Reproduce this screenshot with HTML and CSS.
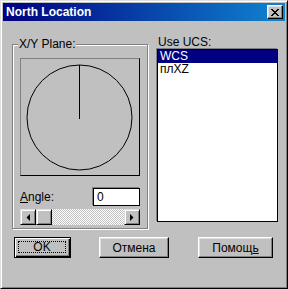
FILE: index.html
```html
<!DOCTYPE html>
<html>
<head>
    <title>North Location</title>
    <link rel="stylesheet" href="styles.css">
</head>
<body>
    <div class="window">
        <div class="titlebar">
            <span class="title">North Location</span>
            <div class="close">
                <svg width="8" height="7" viewBox="0 0 8 7">
                    <path d="M0 0h2v1h1v1h2v-1h1v-1h2v1h-1v1h-1v1h-1v1h1v1h1v1h1v1h-2v-1h-1v-1h-2v1h-1v1h-2v-1h1v-1h1v-1h1v-1h-1v-1h-1v-1h-1z" fill="#000"/>
                </svg>
            </div>
        </div>
        <div class="content">
            <div class="top">
                <div class="group">
                    <span class="legend">X/Y Plane:</span>
                    <div class="dial">
                        <svg width="118" height="116" viewBox="0 0 118 116">
                            <circle cx="58.5" cy="58.5" r="52.5" fill="none" stroke="#000" stroke-width="1"/>
                            <line x1="58.5" y1="6" x2="58.5" y2="60" stroke="#000" stroke-width="1"/>
                        </svg>
                    </div>
                    <div class="angle-row">
                        <span class="angle-label"><u>A</u>ngle:</span>
                        <div class="edit">0</div>
                    </div>
                    <div class="scrollbar">
                        <div class="sb-btn">
                            <svg width="4" height="7" viewBox="0 0 4 7"><path d="M4 0v7L0.5 3.5z" fill="#000"/></svg>
                        </div>
                        <div class="sb-thumb"></div>
                        <div class="sb-track"></div>
                        <div class="sb-btn">
                            <svg width="4" height="7" viewBox="0 0 4 7"><path d="M0 0v7L3.5 3.5z" fill="#000"/></svg>
                        </div>
                    </div>
                </div>
                <div class="ucs">
                    <div class="ucs-label">Use UCS:</div>
                    <div class="listbox">
                        <div class="item selected">WCS</div>
                        <div class="item">плXZ</div>
                    </div>
                </div>
            </div>
            <div class="buttons">
                <div class="btn default btn-ok"><span class="focus">OK</span></div>
                <div class="btn btn-cancel">Отмена</div>
                <div class="btn btn-help">Помощ<u>ь</u></div>
            </div>
        </div>
    </div>
</body>
</html>
```

FILE: styles.css
```css
body {
    margin: 0;
    font-family: 'Liberation Sans', Arial, sans-serif;
    font-size: 12px;
    color: #000;
    background: #c0c0c0;
}
.window {
    width: 288px;
    height: 289px;
    box-sizing: border-box;
    background: #c0c0c0;
    border: 1px solid;
    border-color: #dfdfdf #000 #000 #dfdfdf;
    box-shadow: inset 1px 1px #fff, inset -1px -1px #808080;
    padding: 2px;
}
.titlebar {
    height: 18px;
    display: flex;
    align-items: center;
    justify-content: space-between;
    padding: 0 2px 0 3px;
    background: linear-gradient(90deg, #000080, #1084d0);
}
.title {
    color: #fff;
    font-weight: bold;
    font-size: 12px;
}
.close {
    width: 16px;
    height: 14px;
    box-sizing: border-box;
    background: #c0c0c0;
    border: 1px solid;
    border-color: #fff #000 #000 #fff;
    box-shadow: inset -1px -1px #808080, inset 1px 1px #dfdfdf;
    display: flex;
    align-items: center;
    justify-content: center;
}
.content {
    padding: 0 0 0 9px;
}
.top {
    display: flex;
    gap: 9px;
}
.group {
    position: relative;
    margin-top: 23px;
    width: 136px;
    height: 185px;
    box-sizing: border-box;
    border: 1px solid #808080;
    box-shadow: inset 1px 1px #fff, 1px 1px #fff;
    padding: 13px 0 0 7px;
}
.legend {
    position: absolute;
    top: -8px;
    left: 5px;
    padding: 0 1px;
    background: #c0c0c0;
    line-height: 14px;
}
.dial {
    width: 120px;
    height: 118px;
    box-sizing: border-box;
    border: 1px solid;
    border-color: #808080 #000 #000 #808080;
}
.dial svg {
    display: block;
}
.angle-row {
    display: flex;
    align-items: center;
    justify-content: space-between;
    width: 120px;
    margin-top: 12px;
}
.edit {
    width: 47px;
    height: 18px;
    box-sizing: border-box;
    background: #fff;
    border: 1px solid #000;
    box-shadow: -1px -1px #808080;
    padding: 1px 0 0 3px;
    line-height: 14px;
}
.scrollbar {
    display: flex;
    width: 120px;
    height: 16px;
    margin-top: 3px;
}
.sb-btn,
.sb-thumb {
    width: 16px;
    height: 16px;
    box-sizing: border-box;
    background: #c0c0c0;
    border: 1px solid;
    border-color: #dfdfdf #000 #000 #dfdfdf;
    box-shadow: inset 1px 1px #fff, inset -1px -1px #808080;
    display: flex;
    align-items: center;
    justify-content: center;
}
.sb-track {
    flex: 1;
    background: repeating-conic-gradient(#c0c0c0 0 25%, #fff 0 50%) 0 0 / 2px 2px;
}
.ucs {
    padding-top: 15px;
}
.ucs-label {
    line-height: 13px;
    padding-left: 1px;
}
.listbox {
    width: 121px;
    height: 173px;
    box-sizing: border-box;
    background: #fff;
    border: 1px solid #000;
    box-shadow: -1px -1px #808080;
    padding: 0;
}
.item {
    height: 13px;
    line-height: 13px;
    padding-left: 2px;
}
.item.selected {
    background: #000080;
    color: #fff;
}
.buttons {
    display: flex;
    margin-top: 8px;
    padding-left: 2px;
}
.btn {
    height: 21px;
    box-sizing: border-box;
    background: #c0c0c0;
    border: 1px solid;
    border-color: #fff #000 #000 #fff;
    box-shadow: inset -1px -1px #808080, inset 1px 1px #dfdfdf;
    display: flex;
    align-items: center;
    justify-content: center;
}
.btn.default {
    border: 1px solid #000;
    box-shadow: inset 1px 1px #fff, inset -1px -1px #000, inset -2px -2px #808080;
}
.btn-ok {
    width: 57px;
}
.btn-cancel {
    width: 70px;
    margin-left: 28px;
}
.btn-help {
    width: 75px;
    margin-left: 29px;
}
.focus {
    flex: 1;
    align-self: stretch;
    margin: 3px 4px 4px 3px;
    border: 1px dotted #000;
    display: flex;
    align-items: center;
    justify-content: center;
}
```
